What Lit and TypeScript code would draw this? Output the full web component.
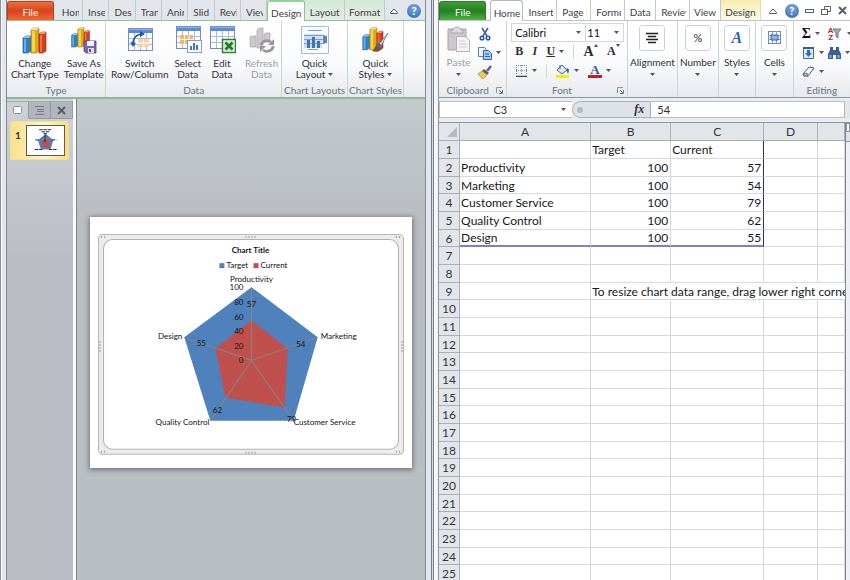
import { LitElement, html, svg, css, nothing } from "lit";
import { customElement, property } from "lit/decorators.js";
import { classMap } from "lit/directives/class-map.js";

const bars = svg`
  <g stroke-width=".6">
    <path d="M2 12l3-2h5v15l-3 2H2z" fill="#2f7fc4" stroke="#1d4f85"/><path d="M2 12l3-2h5l-2 2z" fill="#8cc6ee"/><path d="M3 13h2v13H3z" fill="#6ab2e6"/>
    <path d="M10 4l3-2h5v23l-3 2h-5z" fill="#dba91a" stroke="#99720c"/><path d="M10 4l3-2h5l-2 2z" fill="#fbe88a"/><path d="M11 5h3v21h-3z" fill="#f6d548"/>
    <path d="M18 8l3-2h4v19l-3 2h-4z" fill="#d0401c" stroke="#8e2510"/><path d="M18 8l3-2h4l-2 2z" fill="#f59b78"/><path d="M19 9h2v17h-2z" fill="#f07048"/>
  </g>`;

const sheet = svg`
  <rect x="2.500" y="2.500" width="24" height="22" fill="#fff" stroke="#6f8fc4"/>
  <path d="M3 3h23v4H3z" fill="#5b8ad6"/><path d="M3 3h23v1H3z" fill="#8fb2ea"/>
  <path d="M8.500 7v17M14.500 7v17M20.500 7v17M3 12.500h23M3 18.500h23" stroke="#a8bcdc" fill="none"/>`;

const icons: Record<string, unknown> = {
  bars,
  save: svg`<g transform="scale(.78)">${bars}</g>
    <path d="M14 15h12v12H16l-2-2z" fill="#7a66b4" stroke="#4f3f8a" stroke-width=".8"/><path d="M17 15h7v5h-7z" fill="#f4f2fb"/><path d="M18 22h6v5h-6z" fill="#e3dff2"/><path d="M19 23h2v3h-2z" fill="#5c4a99"/>`,
  swap: svg`${sheet}<path d="M12 13h11v8H12z" fill="#fbd2a4"/><path d="M12 17h11M17.500 13v8" fill="none" stroke="#fff"/>
    <path d="M7 18c0-6 3-9 8-10" fill="none" stroke="#2455a8" stroke-width="1.600"/><path d="M14 5l5 3-5 3zM4 16l3 5 3-4z" fill="#2455a8"/>`,
  select: svg`<g transform="translate(0 -2)">${sheet}<path d="M6 11h13v9H6z" fill="#f7b26c"/><path d="M10.500 11v9M15 11v9M6 15.500h13" stroke="#fff"/></g>
    <rect x="13.500" y="14.500" width="14" height="12" fill="#fbfcff" stroke="#8a9cc0"/><path d="M16 24v-4h2v4zM19 24v-7h2v7zM22 24v-5h2v5z" fill="#4778bb"/>`,
  edit: svg`<g transform="translate(0 -2)">${sheet}</g><rect x="14.500" y="13.500" width="13" height="13" fill="#f3faf2" stroke="#2f7d32" stroke-width="1.500"/><rect x="16" y="15" width="10" height="10" fill="#cfe7cb"/>
    <path d="M17.500 16.500l7 7M24.500 16.500l-7 7" stroke="#1d7a2a" stroke-width="2.600"/>`,
  refresh: svg`<path d="M2 11l2-1h4v11H2zM9 4l2-2h4v20H9zM16 8l2-1h4v9h-6z" fill="#cbc9ce" stroke="#aaa8ad" stroke-width=".7"/>
    <path d="M13 19a6 5 0 0 1 10-3M25 20a6 5 0 0 1-10 4" fill="none" stroke="#98969b" stroke-width="2.600"/><path d="M26 13v6h-6zM12 26v-6h6z" fill="#98969b"/>`,
  layout: svg`<rect x=".500" y=".500" width="27" height="27" fill="#f8fbff" stroke="#a3bde2"/>
    <path d="M7 4.500h14M7 23.500h10" stroke="#7c9bd0"/><path d="M3 8h18v14H3z" fill="#cfdef3"/><path d="M3 9.500h21M3 13.500h21M3 17.500h21" stroke="#7f9dcc"/>
    <path d="M6 22v-8h3v8zM11 22v-11h3v11zM16 22v-7h3v7z" fill="#4472b8"/><path d="M22 10h4v7h-4z" fill="#5f82bd"/>`,
  styles: svg`<g transform="scale(.88)">${bars}</g><path d="M27 7l-9 11 2 2z" fill="#d8dde3" stroke="#6b7684" stroke-width=".8"/><path d="M18 17c-4 1-3 6-7 8 5 2 10 0 10-5z" fill="#7c5030"/><path d="M18 17l3 3-2 2-3-3z" fill="#4a73a8"/>`,
  paste: svg`<path d="M3 4h18v21H3z" fill="#cdc7cd" stroke="#aaa4aa"/><path d="M8 5c0-4 8-4 8 0h2v3H6V5z" fill="#ddd9dd" stroke="#a09aa0" stroke-width=".8"/>
    <path d="M11.500 11.500h9l4 4v11h-13z" fill="#f4f2f5" stroke="#b4b0b8"/><path d="M14 16h6M14 19h8M14 22h8" stroke="#d0ccd4"/>`,
  cut: svg`<path d="M4 1l5 8M10 1L5 9" stroke="#3a5f96" stroke-width="1.500"/><circle cx="4" cy="11" r="1.800" fill="none" stroke="#2a58a8" stroke-width="1.500"/><circle cx="10" cy="11" r="1.800" fill="none" stroke="#2a58a8" stroke-width="1.500"/>`,
  copy: svg`<path d="M.500 1.500h6l2 2v7h-8z" fill="#eef5ff" stroke="#4f7fc0"/><path d="M5.500 4.500h5l3 3v6h-8z" fill="#a9cbf3" stroke="#2d62ad"/><path d="M7 8h4M7 10.500h5" stroke="#2d62ad"/>`,
  brush: svg`<path d="M13 1L9 6" stroke="#6b5aa8" stroke-width="2.500"/><path d="M6 4l5 4-2 2-5-4z" fill="#55606e"/><path d="M4 6l5 4-4 4-5-5z" fill="#f0cb4c" stroke="#a58220" stroke-width=".7"/>`,
  border: svg`<path d="M1.500 1v10M6.500 1v10M11.500 1v10M1 1.500h11M1 6.500h11" stroke="#7d8590" stroke-dasharray="1 1"/><path d="M1 12.500h11" stroke="#444" stroke-width="1.500"/>`,
  fill: svg`<path d="M6 1l5 5-5 4-5-4z" fill="#dce8f7" stroke="#3f6396"/><path d="M4 1v4" stroke="#3f6396"/><path d="M11 4c3 1 2 4 1 6-1-2-1-3-2-4z" fill="#2d6cc0"/><path d="M0 11h13v3H0z" fill="#f4f000"/>`,
  align: svg`<path d="M2 2.500h12M4 5.500h8M2 8.500h12M4 11.500h8" stroke="#222" stroke-width="1.500"/>`,
  cells: svg`<rect x="2.500" y="1.500" width="12" height="12" fill="#f6f9fd" stroke="#6e87ab"/><path d="M2 5.500h12M2 9.500h12M6.500 1v12M10.500 1v12" stroke="#8ba0c0"/><path d="M5 5h7v5H5z" fill="#8db6e8" stroke="#2f5f9f"/>`,
  filldown: svg`<path d="M1.500 1.500h10v11h-10z" fill="#dfeafa" stroke="#426ba8"/><path d="M1 1h11v2H1z" fill="#3d5f93"/><path d="M5 4h3v3h2l-3.500 4L3 7h2z" fill="#2a6cd2"/>`,
  find: svg`<path d="M2 1h3v3h3V1h3v3l2 4v5H8V9H5v4H0V8l2-4z" fill="#3d5f93"/><path d="M1.500 9h2v3h-2zM9.500 9h2v3h-2z" fill="#8fb3e4"/>`,
  eraser: svg`<path d="M1 9l6-7 5 1-6 8H2z" fill="#f5f6fa" stroke="#4b5c7c"/><path d="M1 9l4-1 1 3H2z" fill="#aab7cf" stroke="#4b5c7c" stroke-width=".7"/>`,
  funnel: svg`<path d="M4 2h8L9 6v5L7 9V6z" fill="#aab2bf" stroke="#555f70" stroke-width=".8"/>`,
  up: svg`<path d="M1.500 5.500L5 2l3.500 3.500v1h-7z" fill="#fff" stroke="#555f6b" stroke-width="1"/>`,
  down: svg`<path d="M0 0h5L2.500 3z" fill="#555"/>`,
  grow: svg`<path d="M0 3h4L2 0z" fill="#2c569c"/>`,
  shrink: svg`<path d="M0 0h4L2 3z" fill="#2c569c"/>`,
  min: svg`<rect x=".500" y="3.500" width="8" height="3" fill="#fff" stroke="#59626e"/>`,
  restore: svg`<path d="M3.500 3V.500h6v5H7" fill="#fff" stroke="#59626e"/><rect x=".500" y="3.500" width="6" height="5" fill="#fff" stroke="#59626e"/>`,
  close: svg`<path d="M1 1l7 7M8 1L1 8" stroke="#555f6b" stroke-width="2"/>`,
  slides: svg`<rect x=".500" y=".500" width="8" height="7" rx="1" fill="#fff" stroke="#8a8f98"/>`,
  outline: svg`<path d="M0 .500h9M2 3.500h7M2 5.500h7M0 8.500h9" stroke="#747a84"/>`,
  launcher: svg`<path d="M.500 6V.500H6" fill="none" stroke="#8a93a0"/><path d="M3 3l3 3M6.500 3v3.500H3" fill="none" stroke="#6c7684"/>`,
  corner: svg`<path d="M10 0v10H0z" fill="#b6bac0"/>`,
};

const icon = (name: string, w: number, h = w) =>
  html`<svg width=${w} height=${h} viewBox="0 0 ${w} ${h}" aria-hidden="true">${icons[name]}</svg>`;
const arrow = icon("down", 5, 3);

const shared = css`
  * { box-sizing: border-box; }
  svg { display: block; flex: none; }
  button, input, select {
    font: inherit; color: inherit; margin: 0; padding: 0; border: 0; background: none; border-radius: 0; min-width: 0;
  }
  button { cursor: pointer; }
  .tabs { display: flex; height: 21px; background: #e2e5ea; }
  .tab {
    flex: 26 1 0; min-width: 0; padding: 4px 0 0; text-align: left; white-space: nowrap; overflow: hidden;
    border-right: 1px solid #c3c8cf; color: #3c4046;
  }
  .clip { display: block; margin: 0 3px 0 5px; overflow: hidden; white-space: nowrap; }
  .tab.mid { text-align: center; }
  .tab.on { background: #fff; border: 1px solid #b2b9c2; border-bottom: 0; border-radius: 3px 3px 0 0; padding-top: 3px; }
  .file { color: #fff; border-radius: 3px 3px 0 0; text-align: center; padding-top: 2px; }
  .extras { display: flex; align-items: center; justify-content: space-around; padding-top: 1px; }
  .help {
    width: 14px; height: 14px; border-radius: 50%; background: radial-gradient(circle at 50% 30%, #7fa7dd, #2f66b4);
    color: #fff; font-weight: 700; font-size: 11px; line-height: 14px; text-align: center;
  }
  .ribbon { display: flex; height: 78px; background: linear-gradient(#fff, #fafbfc 55%, #e6e9ed); }
  .group { display: flex; flex-direction: column; min-width: 0; border-right: 1px solid #cfd4da; }
  .group:last-child { border-right: 0; }
  .tools { flex: 1; display: flex; min-height: 0; }
  .caption { display: flex; justify-content: center; height: 14px; line-height: 14px; color: #6a7280; white-space: nowrap; }
  .big { display: flex; flex-direction: column; align-items: center; padding-top: 5px; line-height: 11px; white-space: nowrap; }
  .big .label { margin-top: 4px; text-align: center; }
  .big .drop { display: inline-flex; align-items: center; gap: 3px; }
  .off { color: #9a9da3; }
`;

@customElement("radar-chart")
class RadarChart extends LitElement {
  @property({ type: Boolean }) mini = false;

  static styles = css`
    :host { display: block; }
    svg { display: block; width: 100%; height: auto; }
    text { font: 8px Lato, "Open Sans", sans-serif; fill: #111; text-anchor: middle; }
    .title { font-weight: 700; }
    .start { text-anchor: start; }
    .end { text-anchor: end; }
    .outer { fill: #ececee; stroke: #b5b7ba; }
    .inner { fill: #fff; stroke: #b0b2b5; }
    .target { fill: #4f81bd; }
    .current { fill: #c0504d; }
    .axis { stroke: #868686; fill: none; }
    .grip { stroke: #9a9da1; stroke-width: 2; stroke-dasharray: 1 2; }
    .dash { stroke: #1d1d2b; stroke-width: 8; stroke-dasharray: 30 6; }
  `;

  render() {
    const scale = ["100", "80", "60", "40", "20", "0"];
    return html`<svg viewBox="0 0 321 251" role="img" aria-label="Radar chart of target and current scores">
      ${this.mini ? nothing : svg`
        <rect class="outer" x="8.500" y="17.500" width="304" height="219" rx="4"/>
        <rect class="inner" x="13.500" y="22.500" width="294" height="209" rx="9"/>
        <path class="grip" d="M155 20h12M155 235h12M10 124v12M311 124v12M11 20h5M305 20h5M11 234h5M305 234h5"/>`}
      <path class="target" d="M161 70l66 50-24 83h-83L94 120z"/>
      <path class="current" d="M161 103l36 28-3 59-59-10-10-49z"/>
      <path class="axis" d="M161 70v73l66-23M161 143l42 60M161 143l-41 60M161 143l-67-23"/>
      ${this.mini ? svg`
        <path class="dash" d="M105 32h110M125 50h70M142 66h36M155 75v70M70 120h36M212 120h42M66 203h66M190 203h66" />` : svg`
        <text class="title" x="160" y="36">Chart Title</text>
        <path class="target" d="M129 46h5v5h-5z"/><text class="start" x="136" y="51">Target</text>
        <path class="current" d="M163 46h5v5h-5z"/><text class="start" x="170" y="51">Current</text>
        <text x="161" y="65">Productivity</text>
        ${scale.map((t, i) => svg`<text class="end" x="153" y=${73 + i * 146 / 10}>${t}</text>`)}
        <text x="161" y="90">57</text><text x="210" y="130">54</text><text x="111" y="129">55</text>
        <text x="127" y="195">62</text><text x="201" y="204">79</text>
        <text class="start" x="230" y="122">Marketing</text><text class="end" x="92" y="122">Design</text>
        <text class="start" x="203" y="207">Customer Service</text><text class="end" x="119" y="207">Quality Control</text>`}
    </svg>`;
  }
}

@customElement("slide-window")
class SlideWindow extends LitElement {
  static styles = [shared, css`
    :host { display: flex; flex-direction: column; min-width: 0; box-sizing: border-box; padding: 0 0 0 6px;
      background: linear-gradient(90deg, #8b9097 1px, #fdfdfe 1px, #fdfdfe 2px, #e3e6ec 2px); }
    .frame { flex: 1; display: flex; flex-direction: column; border-left: 1px solid #838991; border-right: 1px solid #838991; }
    .file { flex: 46 1 0; margin: 1px 3px 0 0; background: linear-gradient(#e9703f, #d9421a 50%, #ee6a30); border: 1px solid #b8401c; border-bottom: 0; }
    .tabs { border-bottom: 1px solid #8fc596; }
    .tab.on { flex: 37 1 0; padding-top: 2px; border-color: #8fc596; border-top: 2px solid #93d397; margin-bottom: -1px; z-index: 1; }
    .tab.ctx { flex: 40 1 0; background: linear-gradient(#d2ead5, #e6ebe8); }
    .extras { flex: 41 1 0; }
    .ribbon { border-bottom: 2px solid #8db795; }
    .group { border-color: #bfdcc4; }
    .type { flex: 99 1 0; } .data { flex: 177 1 0; } .layouts { flex: 65 1 0; } .looks { flex: 56 1 0; } .spare { flex: 21 1 0; }
    .b55 { flex: 55 1 0; } .b44 { flex: 42 1 0; } .b68 { flex: 68 1 0; } .b30 { flex: 29 1 0; } .b38 { flex: 40 1 0; }
    .work { flex: 1; display: flex; background: linear-gradient(#c4c9cd, #babec3 120px, #babfc3); }
    .panel { flex: 0 0 66px; padding-top: 2px; background: linear-gradient(#ced2d8, #babec4 160px); }
    .panel-tabs { display: flex; height: 18px; }
    .pane { flex: 1; display: flex; align-items: center; justify-content: center; background: #b0b5be; border: 1px solid #9399a2; border-left: 0; border-top-color: #a7acb4; }
    .pane.cur { background: none; border-bottom-color: transparent; }
    .thumb {
      display: flex; gap: 5px; width: 59px; height: 39px; margin: 2px 0 0 3px; padding: 3px 3px 3px 4px; border: 1px solid #f5df95; border-radius: 2px;
      background: linear-gradient(90deg, #fae08a, #fdf5cf 60%, #f8dc82); font-weight: 700; line-height: 20px;
    }
    .mini { flex: 1; display: flex; align-items: center; height: 31px; background: #fff; border: 1px solid #5f5b4c; }
    .mini > * { flex: 1; }
    .split { flex: 0 0 4px; background: #fafbfc; border-right: 1px solid #7f848b; }
    .stage { flex: 1; display: flex; align-items: center; padding: 6px 13px 0; }
    .slide { flex: 1; background: #fff; box-shadow: 0 1px 5px 1px #6f747b; }
  `];

  render() {
    const tabs = ["Hom", "Inse", "Des", "Tran", "Anin", "Slid", "Revi", "Viev"];
    return html`<div class="frame">
      <nav class="tabs">
        <button class="file">File</button>
        ${tabs.map(t => html`<button class="tab"><span class="clip">${t}</span></button>`)}
        <button class="tab mid on">Design</button>
        <button class="tab mid ctx">Layout</button>
        <button class="tab mid ctx">Format</button>
        <div class="extras"><button aria-label="Minimize ribbon">${icon("up", 10, 8)}</button><button class="help">?</button></div>
      </nav>
      <section class="ribbon">
        <div class="group type"><div class="tools">
          <button class="big b55">${icon("bars", 28)}<span class="label">Change<br>Chart Type</span></button>
          <button class="big b44">${icon("save", 28)}<span class="label">Save As<br>Template</span></button>
        </div><div class="caption">Type</div></div>
        <div class="group data"><div class="tools">
          <button class="big b68">${icon("swap", 28)}<span class="label">Switch<br>Row/Column</span></button>
          <button class="big b30">${icon("select", 28)}<span class="label">Select<br>Data</span></button>
          <button class="big b38">${icon("edit", 28)}<span class="label">Edit<br>Data</span></button>
          <button class="big b38 off">${icon("refresh", 28)}<span class="label">Refresh<br>Data</span></button>
        </div><div class="caption">Data</div></div>
        <div class="group layouts"><div class="tools">
          <button class="big b55">${icon("layout", 28)}<span class="label">Quick<br><span class="drop">Layout ${arrow}</span></span></button>
        </div><div class="caption">Chart Layouts</div></div>
        <div class="group looks"><div class="tools">
          <button class="big b55">${icon("styles", 28)}<span class="label">Quick<br><span class="drop">Styles ${arrow}</span></span></button>
        </div><div class="caption">Chart Styles</div></div>
        <div class="group spare"></div>
      </section>
      <section class="work">
        <aside class="panel">
          <div class="panel-tabs">
            <button class="pane cur" aria-label="Slides">${icon("slides", 9, 8)}</button>
            <button class="pane" aria-label="Outline">${icon("outline", 9)}</button>
            <button class="pane" aria-label="Close">${icon("close", 9)}</button>
          </div>
          <button class="thumb">1<span class="mini"><radar-chart mini></radar-chart></span></button>
        </aside>
        <div class="split"></div>
        <div class="stage"><div class="slide"><radar-chart></radar-chart></div></div>
      </section>
    </div>`;
  }
}

@customElement("sheet-window")
class SheetWindow extends LitElement {
  static styles = [shared, css`
    :host { display: flex; flex-direction: column; min-width: 0; box-sizing: border-box; overflow: hidden; padding-left: 13px;
      background: linear-gradient(90deg, #e3e6ec 5px, #777c84 5px, #777c84 6px, #d8dbe0 6px, #d8dbe0 7px, #777c84 7px, #777c84 8px, #fbfcfd 8px, #eef0f3 12px, #8d939b 12px); }
    .tabs { background: #fff; border-bottom: 1px solid #c0c5cc; }
    .file { flex: 47 1 0; margin: 1px 4px 0 0; background: linear-gradient(#3f9a3c, #23811f 50%, #4fae42); border: 1px solid #2a7a28; border-bottom: 0; }
    .tab { flex: 34 1 0; }
    .tab.on { flex: 32 1 0; margin-bottom: -1px; }
    .tab.ctx { flex: 40 1 0; background: linear-gradient(#f6ecae, #fdfbef); border-right-color: #e6dfae; }
    .extras { flex: 88 1 0; padding-left: 4px; }
    .t36 { flex: 34 1 0; } .t31 { flex: 31 1 0; }
    .ribbon { height: 77px; border-bottom: 1px solid #8f969f; }
    .g68 { flex: 68 1 0; } .g121 { flex: 121 1 0; } .g50 { flex: 50 1 0; } .g40 { flex: 40 1 0; } .g37 { flex: 37 1 0; } .g57 { flex: 57 1 0; }
    .paste { flex: 1; padding-top: 4px; gap: 5px; }
    .stack { flex: 0 0 28px; display: grid; grid-template-rows: repeat(3, 19px); align-items: center; padding-top: 3px; }
    .row { display: flex; align-items: center; gap: 4px; }
    .lead { margin-left: auto; padding: 4px 3px 0 0; }
    .caption .name { margin-left: auto; }
    .font { flex: 1; display: grid; grid-template-rows: 19px 19px 19px; align-content: start; padding: 2px 3px 0 4px; }
    .combos { display: flex; border: 1px solid #d3d7dd; background: #fff; font-size: 11px; color: #111; }
    .combo { display: flex; align-items: center; padding: 0 4px 0 3px; border-right: 1px solid #d3d7dd; }
    .combo:last-child { border: 0; padding-left: 1px; }
    .face { flex: 76 1 0; } .size { flex: 36 1 0; }
    select { flex: 1; appearance: none; outline: 0; }
    .marks { display: flex; align-items: center; justify-content: space-between; padding: 0 4px; font: 700 12px "Liberation Serif", serif; }
    .it { font-style: italic; } .un { text-decoration: underline; }
    .sup { display: flex; align-items: flex-start; }
    .lg { font-size: 14px; }
    .bar { border-left: 1px solid #cfd4da; height: 14px; }
    .paints { display: flex; align-items: center; gap: 9px; padding: 0 4px; }
    .ink { font: 700 13px/11px "Liberation Serif", serif; color: #2c569c; border-bottom: 3px solid #d01818; padding: 0 2px; }
    .tile { display: flex; flex-direction: column; align-items: center; flex: 1; padding-top: 4px; line-height: 12px; gap: 5px; }
    .box { display: grid; place-items: center; width: 26px; height: 26px; border: 1px solid #cdd1d7; border-radius: 3px; background: #fff; font-size: 11px; }
    .big-a { font: italic 700 16px/16px "Liberation Serif", serif; color: #2c62b0; }
    .edit { flex: 1; display: grid; grid-template: repeat(3, 19px) / 26px 26px; padding: 3px 0 0 8px; align-items: center; }
    .sum { font: 700 14px "Liberation Serif", serif; color: #111; }
    .az { font: 700 8px/7px "Liberation Sans", sans-serif; color: #b02d2d; margin-right: -8px; }
    .formula { display: flex; height: 25px; padding: 3px 0 4px; background: #e9ecf0; font-size: 11px; border-bottom: 1px solid #8f969f; }
    .namebox { flex: 134 1 0; display: flex; align-items: center; background: #fff; border: 1px solid #b9bec5; border-right: 0; padding-right: 6px; }
    .namebox input { flex: 1; text-align: center; outline: 0; }
    .fx { flex: 72 1 0; display: flex; justify-content: space-between; align-items: center; padding: 0 6px 0 4px; border: 1px solid #aab0b8; border-radius: 9px 0 0 9px; background: #dfe3e8; font: italic 700 12px "Liberation Serif", serif; }
    .knob { width: 6px; height: 6px; border-radius: 50%; background: #b4b9c1; }
    .value { flex: 199 1 0; padding-left: 6px; background: #fff; border-top: 1px solid #b9bec5; border-bottom: 1px solid #b9bec5; outline: 0; }
    .expand { flex: 0 0 6px; background: #e3e6ea; border-left: 1px solid #b0b5bc; }
    .grid { flex: 1; display: flex; min-height: 0; }
    .cells { flex: 1; min-width: 0; overflow: hidden; background: #fff; }
    table { width: 100%; table-layout: fixed; border-collapse: separate; border-spacing: 0; font-size: 12px; color: #16181b; }
    th, td { height: 18px; padding: 0 2px 0 1px; line-height: 15px; border-right: 1px solid #d5d8dc; border-bottom: 1px solid #d5d8dc; white-space: nowrap; text-align: left; }
    tbody tr:nth-child(3n) > * { height: 17px; }
    th { font-weight: 400; text-align: center; color: #32363c; background: #e2e5ea; border-color: #a9afb8; padding: 0; }
    .corner { padding: 0 2px 0 8px; }
    td.num { text-align: right; }
    .c0 { width: 5.2%; } .c1 { width: 32.3%; } .c2 { width: 19.7%; } .c3 { width: 22.9%; } .c4 { width: 13.2%; }
    td.spill { overflow: visible; border-right-color: transparent; }
    td.bottom { border-bottom: 2px solid #7f80bd; line-height: 14px; }
    td.side { border-right: 1px solid #2b2b8f; }
    .scroll { flex: 0 0 5px; border-left: 1px solid #7f848c; background: #eef0f5; }
    .splitter { height: 9px; border: 1px solid #8b9098; background: #fff; }
    .uparr { height: 10px; background: #dfe2e8; border-bottom: 1px solid #8b9098; }
  `];

  render() {
    const rows: Record<number, string[]> = {
      1: ["", "Target", "Current"], 2: ["Productivity", "100", "57"], 3: ["Marketing", "100", "54"],
      4: ["Customer Service", "100", "79"], 5: ["Quality Control", "100", "62"], 6: ["Design", "100", "55"],
      9: ["", "To resize chart data range, drag lower right corner"],
    };
    const tile = (name: string, art: unknown) =>
      html`<button class="tile"><span class="box">${art}</span><span>${name}</span>${arrow}</button>`;
    const tab = (name: string, cls = "") => html`<button class="tab ${cls}"><span class="clip">${name}</span></button>`;
    return html`
      <nav class="tabs">
        <button class="file">File</button>
        <button class="tab mid on">Home</button>
        ${tab("Insert")}${tab("Page l")}${tab("Formu")}
        <button class="tab mid t31">Data</button>
        ${tab("Reviev", "t36")}
        <button class="tab mid t31">View</button>
        <button class="tab mid ctx">Design</button>
        <div class="extras">
          <button aria-label="Minimize ribbon">${icon("up", 10, 8)}</button><button class="help">?</button>
          <button aria-label="Minimize">${icon("min", 9)}</button><button aria-label="Restore">${icon("restore", 10, 9)}</button><button aria-label="Close">${icon("close", 9)}</button>
        </div>
      </nav>
      <section class="ribbon">
        <div class="group g68"><div class="tools">
          <button class="big paste off">${icon("paste", 27)}<span>Paste</span>${arrow}</button>
          <div class="stack">
            <button class="row" aria-label="Cut">${icon("cut", 14)}</button>
            <button class="row" aria-label="Copy">${icon("copy", 14)}${arrow}</button>
            <button class="row" aria-label="Format painter">${icon("brush", 14)}</button>
          </div>
        </div><div class="caption"><span class="name">Clipboard</span><span class="lead">${icon("launcher", 7)}</span></div></div>
        <div class="group g121"><div class="font">
          <div class="combos">
            <label class="combo face"><select aria-label="Font"><option>Calibri</option></select>${arrow}</label>
            <label class="combo size"><select aria-label="Font size"><option>11</option></select>${arrow}</label>
          </div>
          <div class="marks">
            <button>B</button><button class="it">I</button><button class="row"><span class="un">U</span>${arrow}</button><span class="bar"></span>
            <button class="sup lg">A${icon("grow", 4, 3)}</button><button class="sup">A${icon("shrink", 4, 3)}</button>
          </div>
          <div class="paints">
            <button class="row" aria-label="Borders">${icon("border", 13)}${arrow}</button>
            <span class="bar"></span>
            <button class="row" aria-label="Fill colour">${icon("fill", 14)}${arrow}</button>
            <button class="row"><span class="ink">A</span>${arrow}</button>
          </div>
        </div><div class="caption"><span class="name">Font</span><span class="lead">${icon("launcher", 7)}</span></div></div>
        <div class="group g50">${tile("Alignment", icon("align", 16, 14))}</div>
        <div class="group g40">${tile("Number", "%")}</div>
        <div class="group g37">${tile("Styles", html`<span class="big-a">A</span>`)}</div>
        <div class="group g37">${tile("Cells", icon("cells", 16))}</div>
        <div class="group g57"><div class="edit">
          <button class="row"><span class="sum">Σ</span>${arrow}</button>
          <button class="row"><span class="az">A<br>Z</span>${icon("funnel", 14)}${arrow}</button>
          <button class="row" aria-label="Fill">${icon("filldown", 13)}${arrow}</button>
          <button class="row" aria-label="Find">${icon("find", 13)}${arrow}</button>
          <button class="row" aria-label="Clear">${icon("eraser", 13)}${arrow}</button>
        </div><div class="caption">Editing</div></div>
      </section>
      <section class="formula">
        <label class="namebox"><input aria-label="Name box" size="1" .value=${"C3"}>${arrow}</label>
        <div class="fx"><span class="knob"></span><span>fx</span></div>
        <input class="value" aria-label="Formula" size="1" .value=${"54"}>
        <button class="expand" aria-label="Expand"></button>
      </section>
      <section class="grid">
        <div class="cells"><table>
          <thead><tr>
            <th class="c0 corner">${icon("corner", 10)}</th><th class="c1">A</th><th class="c2">B</th><th class="c3">C</th><th class="c4">D</th><th></th>
          </tr></thead>
          <tbody>${Array.from({ length: 25 }, (_, i) => i + 1).map(n => html`<tr><th>${n}</th>${[0, 1, 2, 3, 4].map(c => {
            const text = rows[n]?.[c] ?? "";
            return html`<td class=${classMap({
              num: /^\d+$/.test(text), bottom: n === 6 && c < 3, side: n < 7 && c === 2, spill: n === 9 && c > 0,
            })}>${text}</td>`;
          })}</tr>`)}</tbody>
        </table></div>
        <div class="scroll"><div class="splitter"></div><div class="uparr"></div></div>
      </section>`;
  }
}

@customElement("app-root")
class AppRoot extends LitElement {
  static styles = css`
    :host { display: flex; height: 100vh; overflow: hidden; background: #e3e6ec; color: #2d3036; font: 10px/16px Lato, "Open Sans", sans-serif; }
    slide-window { flex: 420 1 0; }
    sheet-window { flex: 411 1 0; }
  `;
  render() {
    return html`<slide-window></slide-window><sheet-window></sheet-window>`;
  }
}
